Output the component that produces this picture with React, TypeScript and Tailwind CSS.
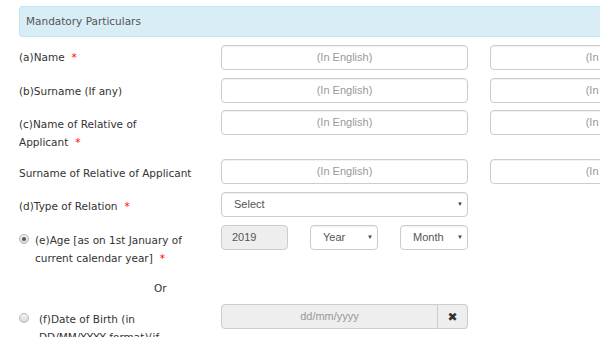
import React from 'react';

const Star = () => <span className="ml-[7px] text-[#f00]">*</span>;

function TextBox({ placeholder = '(In English)', className = '' }: { placeholder?: string; className?: string }) {
  return (
    <div
      className={`h-[25px] w-[247px] shrink-0 rounded-[4px] border border-[#ccc] bg-white flex items-center justify-center font-['Liberation_Sans',Arial,sans-serif] text-[11px] text-[#999] shadow-[inset_0_1px_1px_rgba(0,0,0,0.06)] ${className}`}
    >
      {placeholder}
    </div>
  );
}

function SelectBox({ label, className = '' }: { label: string; className?: string }) {
  return (
    <div
      className={`relative h-[25px] shrink-0 rounded-[4px] border border-[#ccc] bg-white flex items-center font-['Liberation_Sans',Arial,sans-serif] text-[11px] text-[#555] shadow-[inset_0_1px_1px_rgba(0,0,0,0.06)] ${className}`}
    >
      <span className="pl-[12px]">{label}</span>
      <span className="absolute right-[4px] top-[8px] text-[6px] leading-none text-[#444]">▼</span>
    </div>
  );
}

function Radio({ checked }: { checked?: boolean }) {
  return (
    <span className="mt-[3px] inline-flex h-[10px] w-[10px] shrink-0 items-center justify-center rounded-full border border-[#b5b5b5] bg-gradient-to-b from-[#f4f4f4] to-[#d8d8d8]">
      {checked && <span className="h-[4px] w-[4px] rounded-full bg-[#555]" />}
    </span>
  );
}

function Row({ label, children, className = '', labelClass = 'pt-[5px]' }: { label: React.ReactNode; children: React.ReactNode; className?: string; labelClass?: string }) {
  return (
    <div className={`flex items-start ${className}`}>
      <div className={`w-[202px] shrink-0 leading-[18px] ${labelClass}`}>{label}</div>
      {children}
    </div>
  );
}

export default function App() {
  return (
    <div className="h-[337px] w-[600px] overflow-hidden bg-white font-['DejaVu_Sans',Verdana,sans-serif] text-[10.5px] text-[#333]">
      <div className="w-[820px] pl-[19px]">
        <div className="mt-[6px] flex h-[31px] items-center rounded-l-[3px] border border-[#bce8f1] bg-[#d9edf7] pl-[6px] text-[#555]">
          Mandatory Particulars
        </div>

        <Row label={<>(a)Name<Star /></>} className="mt-[8px]" labelClass="pt-[3px]">
          <TextBox />
          <TextBox className="ml-[22px]" />
        </Row>

        <Row label="(b)Surname (If any)" className="mt-[8px]" labelClass="pt-[4px]">
          <TextBox />
          <TextBox className="ml-[22px]" />
        </Row>

        <Row label={<>(c)Name of Relative of<br />Applicant<Star /></>} className="mt-[7px]" labelClass="pt-[5px]">
          <TextBox />
          <TextBox className="ml-[22px]" />
        </Row>

        <Row label="Surname of Relative of Applicant" className="mt-[8px]">
          <TextBox />
          <TextBox className="ml-[22px]" />
        </Row>

        <Row label={<>(d)Type of Relation<Star /></>} className="mt-[8px]">
          <SelectBox label="Select" className="w-[247px]" />
        </Row>

        <Row
          className="mt-[8px]"
          labelClass="pt-[6px]"
          label={
            <div className="flex items-start">
              <Radio checked />
              <span className="ml-[6px]">
                (e)Age [as on 1st January of
                <br />
                current calendar year]<Star />
              </span>
            </div>
          }
        >
          <div className="flex h-[25px] w-[67px] items-center rounded-[4px] border border-[#ccc] bg-[#eee] pl-[10px] font-['Liberation_Sans',Arial,sans-serif] text-[11px] text-[#555]">
            2019
          </div>
          <SelectBox label="Year" className="ml-[22px] w-[68px]" />
          <SelectBox label="Month" className="ml-[22px] w-[68px]" />
        </Row>

        <div className="mt-[12px] h-[18px] pl-[135px] leading-[18px]">Or</div>

        <Row
          className="mt-[7px]"
          labelClass="pt-[6px]"
          label={
            <div className="flex items-start">
              <Radio />
              <span className="ml-[10px]">
                (f)Date of Birth (in
                <br />
                DD/MM/YYYY format)(if
              </span>
            </div>
          }
        >
          <div className="flex h-[25px] w-[217px] items-center justify-center rounded-l-[4px] border border-[#ccc] bg-[#eee] font-['Liberation_Sans',Arial,sans-serif] text-[11px] text-[#999]">
            dd/mm/yyyy
          </div>
          <div className="flex h-[25px] w-[30px] items-center justify-center rounded-r-[4px] border border-l-0 border-[#ccc] bg-[#eee] text-[12px] font-bold text-[#333]">
            ✖
          </div>
        </Row>
      </div>
    </div>
  );
}
